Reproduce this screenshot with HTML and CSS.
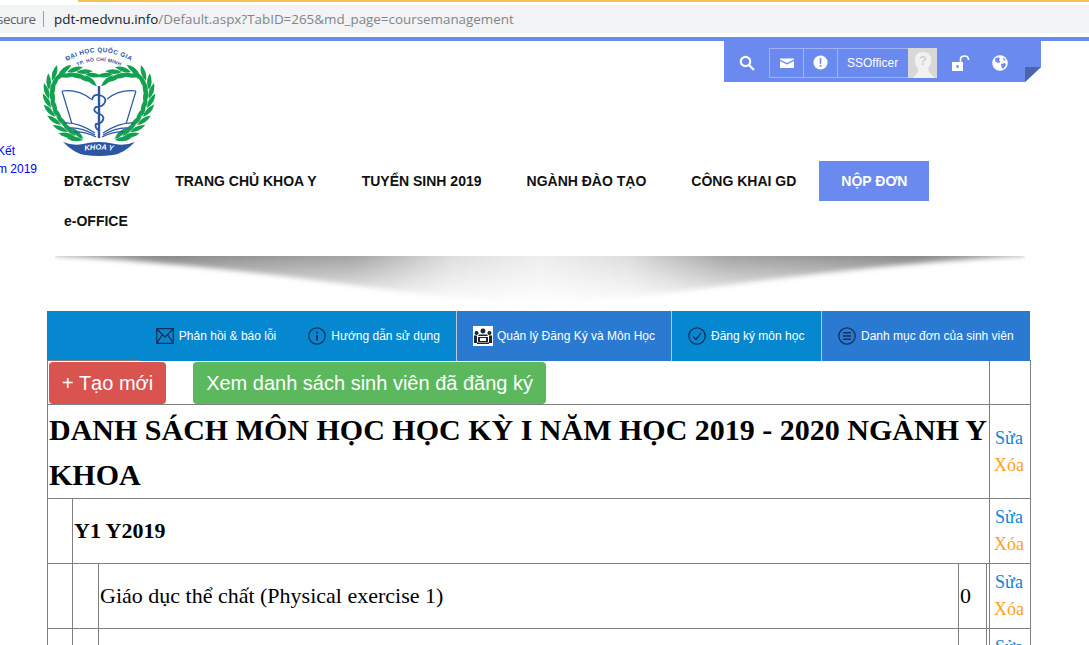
FILE: index.html
```html
<!DOCTYPE html>
<html lang="vi">
<head>
  <meta charset="UTF-8">
  <title>Quản lý Đăng Ký và Môn Học</title>
  <link rel="stylesheet" href="styles.css">
</head>
<body>
  <div class="browser-bar">
    <div class="address">
      <span class="secure">secure</span>
      <span class="url"><b>pdt-medvnu.info</b>/Default.aspx?TabID=265&amp;md_page=coursemanagement</span>
    </div>
  </div>

  <div class="top">
    <div class="side">
      <a href="#">Kết</a>
      <a href="#">m 2019</a>
    </div>
    <div class="top-main">
      <div class="brand">
        <svg class="logo" viewBox="0 0 112 112" width="112" height="112">
          <defs>
            <path id="arc1" d="M24 15 Q56 -3 88 15"/>
            <path id="arc2" d="M33 21 Q56 9 79 21"/>
            <path id="arc3" d="M36 106 Q56 101 76 106"/>
            <g id="pair">
              <path d="M0 0 Q7 -7 16 -5 Q9 2 0 0Z"/>
              <path d="M0 1 Q7 8 16 6 Q9 -1 0 1Z"/>
            </g>
            <g id="wreath">
              <use href="#pair" transform="translate(40 94) rotate(205)"/>
              <use href="#pair" transform="translate(32 91) rotate(210)"/>
              <use href="#pair" transform="translate(25 86) rotate(222)"/>
              <use href="#pair" transform="translate(18 79) rotate(232)"/>
              <use href="#pair" transform="translate(12 71) rotate(245)"/>
              <use href="#pair" transform="translate(8 62) rotate(258)"/>
              <use href="#pair" transform="translate(6 53) rotate(270)"/>
              <use href="#pair" transform="translate(6 44) rotate(285)"/>
              <use href="#pair" transform="translate(9 35) rotate(305)"/>
              <use href="#pair" transform="translate(15 29) rotate(340)"/>
              <use href="#pair" transform="translate(24 26) rotate(0)"/>
              <use href="#pair" transform="translate(33 26) rotate(15)"/>
              <use href="#pair" transform="translate(42 28) rotate(25)"/>
            </g>
            <g id="page">
              <path d="M19 45 Q35 43 48 53 M19 45 L29 78 M21 77 Q35 76 52 87 M26 82 Q38 81 52 89 M31 86 Q41 85 53 91" fill="none"/>
            </g>
          </defs>
          <text class="logo-top"><textPath href="#arc1" startOffset="50%">ĐẠI HỌC QUỐC GIA</textPath></text>
          <text class="logo-sub"><textPath href="#arc2" startOffset="50%">TP. HỒ CHÍ MINH</textPath></text>
          <g class="logo-leaves">
            <use href="#wreath"/>
            <use href="#wreath" transform="translate(112 0) scale(-1 1)"/>
          </g>
          <g class="logo-book">
            <use href="#page"/>
            <use href="#page" transform="translate(112 0) scale(-1 1)"/>
            <path d="M56 40 V92" stroke-width="2.4"/>
            <path d="M49 54 Q50 48 56 49 Q64 51 62 56 Q60 61 53 61 Q49 64 54 67 Q62 69 60 74 Q58 78 53 78 Q51 82 57 85" stroke-width="1.8"/>
          </g>
          <path class="logo-ribbon" d="M20 96 Q30 100 40 98 Q56 94 72 98 Q82 100 92 96 Q80 108 70 109 Q56 111 42 109 Q32 108 20 96Z"/>
          <text class="logo-khoa"><textPath href="#arc3" startOffset="50%">KHOA Y</textPath></text>
        </svg>

        <div class="toolbar">
          <svg class="tool-search" viewBox="0 0 16 16" width="16" height="16"><circle cx="6.5" cy="6.5" r="4.7"/><path d="M10 10 L15 15"/></svg>
          <div class="tool-box">
            <span class="tool-cell">
              <svg viewBox="0 0 16 12" width="16" height="12"><path class="solid" d="M1 1.5 H15 V2.5 L8 6 L1 2.5Z M1 4 L8 7.5 L15 4 V11 H1Z"/></svg>
            </span>
            <span class="tool-cell">
              <svg viewBox="0 0 16 16" width="15" height="15"><circle class="solid" cx="8" cy="8" r="7.5"/><path class="mark" d="M7 3.5 H9 L8.7 9.5 H7.3Z M7 10.7 H9 V12.6 H7Z"/></svg>
            </span>
            <span class="tool-name">SSOfficer</span>
            <span class="avatar">
              <svg viewBox="0 0 30 30" width="30" height="30">
                <path class="avatar-back" d="M0 0 H30 V30 H0Z"/>
                <path class="avatar-head" d="M15 4 Q23 4 23 12 Q23 18 20 20 L21 24 L27 30 H5 L10 24 L10 20 Q7 18 7 12 Q7 4 15 4Z"/>
                <text class="avatar-q" x="15" y="17">?</text>
              </svg>
            </span>
          </div>
          <svg class="tool-lock" viewBox="0 0 18 16" width="18" height="16"><path class="solid" d="M0 7 H11 V16 H0Z"/><path class="shackle" d="M8.5 7 V4.5 Q8.5 1 12.5 1 Q16.5 1 16.5 5"/><path class="mark" d="M4.5 10 H6.5 V13 H4.5Z"/></svg>
          <svg class="tool-globe" viewBox="0 0 16 16" width="16" height="16"><circle class="solid" cx="8" cy="8" r="7.8"/><path class="mark" d="M3 3.5 Q6 2 8 3 L7 5 L8.5 7 L6 8 L3.5 6.5Z M9 9 L13 8 L14 10 L11 14 L9.5 12Z M11 2.5 L14 5 L11.5 5.5Z"/></svg>
        </div>
      </div>

      <nav class="menu">
        <a href="#">ĐT&amp;CTSV</a>
        <a href="#">TRANG CHỦ KHOA Y</a>
        <a href="#">TUYỂN SINH 2019</a>
        <a href="#">NGÀNH ĐÀO TẠO</a>
        <a href="#">CÔNG KHAI GD</a>
        <a href="#" class="menu-active">NỘP ĐƠN</a>
        <a href="#">e-OFFICE</a>
      </nav>
    </div>
  </div>

  <svg class="shadow" viewBox="0 0 970 50" width="970" height="50">
    <defs>
      <linearGradient id="shadeX">
        <stop offset="0" stop-color="#b0b0b0"/>
        <stop offset="0.11" stop-color="#8a8a8a"/>
        <stop offset="0.31" stop-color="#a5a5a5"/>
        <stop offset="0.41" stop-color="#dedede"/>
        <stop offset="0.5" stop-color="#eeeeee"/>
        <stop offset="0.59" stop-color="#dedede"/>
        <stop offset="0.69" stop-color="#a5a5a5"/>
        <stop offset="0.89" stop-color="#8a8a8a"/>
        <stop offset="1" stop-color="#b0b0b0"/>
      </linearGradient>
      <linearGradient id="fadeY" x1="0" y1="0" x2="0" y2="1">
        <stop offset="0" stop-color="#fff"/>
        <stop offset="1" stop-color="#000"/>
      </linearGradient>
      <mask id="fade" maskUnits="userSpaceOnUse" x="0" y="0" width="970" height="50">
        <rect width="970" height="50" fill="url(#fadeY)"/>
      </mask>
      <filter id="soft" x="-5%" y="-20%" width="110%" height="140%"><feGaussianBlur stdDeviation="2.5"/></filter>
    </defs>
    <g mask="url(#fade)">
      <path d="M0 -6 H970 V0 C720 14 590 48 485 48 C380 48 250 14 0 0Z" fill="url(#shadeX)" filter="url(#soft)"/>
    </g>
  </svg>

  <div class="tabs">
    <div class="tab-group">
      <a href="#" class="tab">
        <svg viewBox="0 0 18 16" width="18" height="16"><path d="M.7 .7 H17.3 V15.3 H.7Z M.7 .7 L9 9 L17.3 .7 M.7 15.3 L6.5 6.5 M17.3 15.3 L11.5 6.5"/></svg>
        Phản hồi &amp; báo lỗi
      </a>
      <a href="#" class="tab">
        <svg viewBox="0 0 18 18" width="18" height="18"><circle cx="9" cy="9" r="8.2"/><path d="M9 8 V13.5 M9 4.8 V6.4" stroke-width="2"/></svg>
        Hướng dẫn sử dụng
      </a>
    </div>
    <a href="#" class="tab tab-alt">
      <svg class="tab-people" viewBox="0 0 20 20" width="20" height="20">
        <path class="people-back" d="M0 0 H20 V20 H0Z"/>
        <path class="people" d="M10 2.5 A2.5 2.5 0 1 1 9.9 2.5Z M3.6 5 A2 2 0 1 1 3.5 5Z M16.5 5 A2 2 0 1 1 16.4 5Z M6 8.5 H14 L15 10 H5Z M1 9.5 H4 V17 H1Z M16 9.5 H19 V17 H16Z M5 11 H15 V16 H5Z M4 16.5 H16 V18 H4Z"/>
        <path class="people-back" d="M7 12 H13 V15 H7Z"/>
      </svg>
      Quản lý Đăng Ký và Môn Học
    </a>
    <a href="#" class="tab tab-mid">
      <svg viewBox="0 0 18 18" width="18" height="18"><circle cx="9" cy="9" r="8.2"/><path d="M5 9.5 L8 12.5 L13 6"/></svg>
      Đăng ký môn học
    </a>
    <a href="#" class="tab tab-alt tab-last">
      <svg viewBox="0 0 18 18" width="18" height="18"><circle cx="9" cy="9" r="8.2"/><path d="M5 5.8 H13 M5 9 H13 M5 12.2 H13" stroke-width="1.6"/></svg>
      Danh mục đơn của sinh viên
    </a>
  </div>

  <table class="courses">
    <colgroup>
      <col class="col-indent"><col class="col-indent2"><col class="col-name"><col class="col-num"><col class="col-thin"><col class="col-edit">
    </colgroup>
    <tr class="row-actions">
      <td colspan="5">
        <a href="#" class="btn btn-red">+ Tạo mới</a>
        <a href="#" class="btn btn-green">Xem danh sách sinh viên đã đăng ký</a>
      </td>
      <td></td>
    </tr>
    <tr class="row-title">
      <td colspan="5"><h2>DANH SÁCH MÔN HỌC HỌC KỲ I NĂM HỌC 2019 - 2020 NGÀNH Y KHOA</h2></td>
      <td class="edit"><a href="#" class="edit-link">Sửa</a><a href="#" class="del-link">Xóa</a></td>
    </tr>
    <tr class="row-item">
      <td></td>
      <td colspan="4"><h3>Y1 Y2019</h3></td>
      <td class="edit"><a href="#" class="edit-link">Sửa</a><a href="#" class="del-link">Xóa</a></td>
    </tr>
    <tr class="row-item">
      <td></td>
      <td></td>
      <td class="course">Giáo dục thể chất (Physical exercise 1)</td>
      <td class="course">0</td>
      <td class="thin"></td>
      <td class="edit"><a href="#" class="edit-link">Sửa</a><a href="#" class="del-link">Xóa</a></td>
    </tr>
    <tr class="row-item">
      <td></td>
      <td></td>
      <td class="course"></td>
      <td class="course"></td>
      <td class="thin"></td>
      <td class="edit"><a href="#" class="edit-link">Sửa</a><a href="#" class="del-link">Xóa</a></td>
    </tr>
  </table>
</body>
</html>
```

FILE: styles.css
```css
html, body {
  margin: 0;
  height: 645px;
  overflow: hidden;
  background: #fff;
}
body {
  font-family: "Liberation Sans", Arial, sans-serif;
}
a {
  text-decoration: none;
}

.browser-bar {
  height: 28px;
  padding: 5px 0 4px;
  background: linear-gradient(#f5c451 0, #f5c451 2px, #fff 2px) no-repeat 78px 0 / 100% 5px;
  border-bottom: 4px solid #6a8af0;
  overflow: hidden;
}
.address {
  height: 28px;
  background: #f1f3f4;
  display: flex;
  align-items: center;
  font-family: "Open Sans", sans-serif;
  font-size: 13.4px;
  color: #80868b;
  white-space: nowrap;
}
.secure {
  flex: none;
  width: 47px;
  margin-left: -3px;
  margin-right: 10px;
  box-sizing: border-box;
  height: 16px;
  line-height: 16px;
  letter-spacing: -.5px;
  border-right: 1px solid #9a9fa3;
  color: #5f6368;
}
.url b {
  font-weight: normal;
  color: #202124;
}

.top {
  display: flex;
}
.side {
  width: 41px;
  flex: none;
  padding-top: 101px;
  font-size: 12px;
  line-height: 18px;
  text-indent: -3px;
}
.side a {
  display: block;
  color: #0000ff;
  white-space: nowrap;
}
.top-main {
  flex: 1;
  min-width: 0;
}
.brand {
  height: 120px;
  display: flex;
  justify-content: space-between;
  align-items: flex-start;
}
.logo {
  display: block;
  margin: 5px 0 0 2px;
  overflow: visible;
}
.logo-top, .logo-sub {
  fill: #2a56a4;
  text-anchor: middle;
  font-weight: bold;
}
.logo-top { font-size: 6.4px; letter-spacing: .4px; }
.logo-sub { font-size: 5px; letter-spacing: .3px; }
.logo-leaves { fill: #12a150; }
.logo-book {
  fill: none;
  stroke: #2a56a4;
  stroke-width: 1.2;
}
.logo-ribbon { fill: #2a56a4; }
.logo-khoa {
  fill: #fff;
  font-size: 7.5px;
  font-style: italic;
  font-weight: bold;
  text-anchor: middle;
}

.toolbar {
  position: relative;
  width: 317px;
  height: 41px;
  margin-right: 48px;
  padding: 2px 0 0 15px;
  box-sizing: border-box;
  background: #6a8af0;
  display: flex;
  align-items: center;
}
.toolbar::after {
  content: "";
  position: absolute;
  right: 0;
  bottom: 0;
  border-style: solid;
  border-width: 15px 16px 0 0;
  border-color: #4b64ae transparent transparent transparent;
}
.toolbar::before {
  content: "";
  position: absolute;
  right: 0;
  bottom: 0;
  border-style: solid;
  border-width: 0 0 15px 16px;
  border-color: transparent transparent #fff transparent;
}
.tool-search {
  flex: none;
  margin-right: 14px;
  fill: none;
  stroke: #fff;
  stroke-width: 2.2;
}
.tool-box {
  display: flex;
  height: 30px;
  border: 1px solid rgba(255, 255, 255, .35);
  box-sizing: border-box;
  border-right: 0;
}
.tool-cell {
  width: 34px;
  box-sizing: border-box;
  border-right: 1px solid rgba(255, 255, 255, .35);
  display: flex;
  align-items: center;
  justify-content: center;
}
.tool-name {
  width: 70px;
  box-sizing: border-box;
  padding-left: 9px;
  color: #fff;
  font-size: 12px;
  line-height: 28px;
}
.avatar {
  display: block;
  width: 29px;
  height: 30px;
  margin-top: -1px;
  overflow: hidden;
}
.avatar-back { fill: #d8d8d8; }
.avatar-head { fill: #f2f2f2; }
.avatar-q {
  fill: #d0d0d0;
  font-size: 13px;
  font-weight: bold;
  text-anchor: middle;
}
.solid { fill: #fff; }
.mark { fill: #6a8af0; }
.shackle {
  fill: none;
  stroke: #fff;
  stroke-width: 1.6;
}
.tool-lock {
  flex: none;
  margin-left: 15px;
}
.tool-globe {
  flex: none;
  margin-left: 22px;
}

.menu {
  width: 990px;
  padding-left: 1px;
  box-sizing: border-box;
  display: flex;
  flex-wrap: wrap;
}
.menu a {
  padding: 0 22px;
  margin-right: 1px;
  line-height: 40px;
  font-size: 14px;
  font-weight: bold;
  color: #111;
  white-space: nowrap;
}
.menu .menu-active {
  background: #6a8af0;
  color: #fff;
}

.shadow {
  display: block;
  margin: 15px 0 5px 55px;
}

.tabs {
  margin-left: 47px;
  width: 983px;
  height: 50px;
  display: flex;
  background: #0688d0;
}
.tab-group {
  flex: 1;
  display: flex;
  justify-content: flex-end;
}
.tab {
  display: flex;
  align-items: center;
  gap: 5px;
  padding: 0 16px;
  height: 50px;
  box-sizing: border-box;
  color: #fff;
  font-size: 12px;
  white-space: nowrap;
  background: #0688d0;
}
.tab svg {
  flex: none;
  fill: none;
  stroke: #12315c;
  stroke-width: 1.3;
}
.tab .people { fill: #1c2530; stroke: none; }
.tab .people-back { fill: #fff; stroke: none; }
.tab-people { margin-right: -1px; }
.tab-alt {
  background: #2b7ad2;
  border-left: 1px solid #b9c8d6;
  border-right: 1px solid #b9c8d6;
}
.tab-mid { width: 149px; }
.tab-last {
  width: 209px;
  border-right: 0;
}

.courses {
  margin: -1px 0 0 47px;
  width: 983px;
  table-layout: fixed;
  border-collapse: collapse;
  font-family: "Liberation Serif", "Times New Roman", serif;
  color: #000;
}
.courses td {
  border: 1px solid #808080;
  padding: 1px;
  vertical-align: middle;
}
.col-indent { width: 25px; }
.col-indent2 { width: 26px; }
.col-name { width: 860px; }
.col-num { width: 28px; }
.col-thin { width: 3px; }
.col-edit { width: 41px; }
.courses .thin { padding: 0; }
.courses .row-actions td {
  height: 42px;
  padding-bottom: 0;
  font-size: 0;
}
.row-title td { height: 91px; }
.row-item td { height: 62px; }
.btn {
  display: inline-block;
  height: 42px;
  line-height: 42px;
  box-sizing: border-box;
  padding: 0 13px;
  border-radius: 4px;
  color: #fff;
  font-family: "Liberation Sans", Arial, sans-serif;
  font-size: 20px;
}
.btn-red {
  background: #d9534f;
  margin-right: 27px;
}
.btn-green { background: #5cb85c; }
.courses h2 {
  margin: 0;
  font-size: 30px;
  line-height: 45px;
}
.courses h3 {
  margin: 0;
  font-size: 22px;
}
.course {
  font-size: 22px;
}
.courses .edit {
  padding-right: 3px;
  text-align: center;
  font-size: 18px;
  line-height: 27px;
}
.edit a {
  display: block;
}
.edit-link { color: #0a84d6; }
.del-link { color: #ff9f1a; }
```
